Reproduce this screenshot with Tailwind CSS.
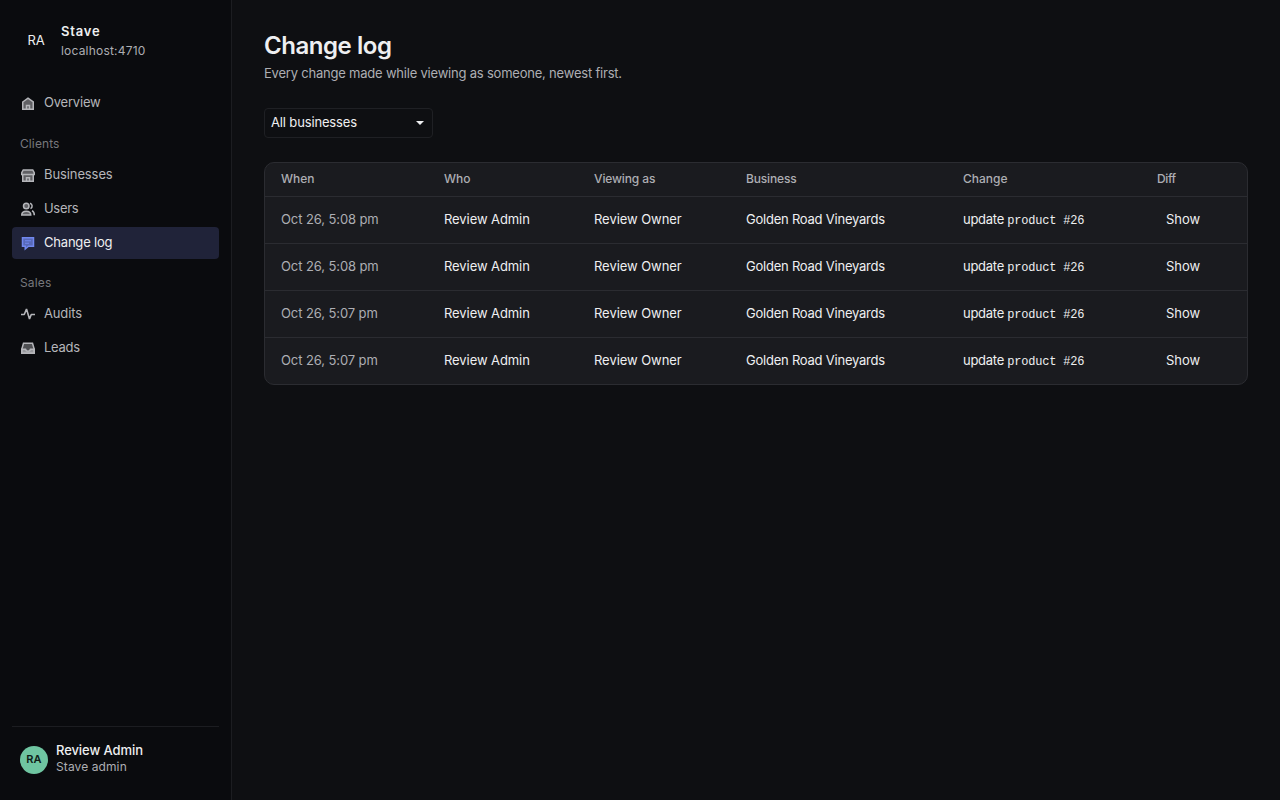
<!DOCTYPE html>
<html lang="en">
<head>
  <meta charset="UTF-8">
  <title>Change log</title>
  <script src="https://cdn.jsdelivr.net/npm/@tailwindcss/browser@4"></script>
</head>
<body class="flex h-screen overflow-hidden bg-[#0e0f12] font-['Inter','Liberation_Sans',sans-serif] text-[13px] leading-5 text-[#eeeff1]">
  <aside class="flex w-[232px] shrink-0 flex-col border-r border-[#1c1d21] bg-[#0a0b0e] px-3 pt-5 pb-[23px]">
    <div class="flex h-10 items-center gap-[9px] pl-2">
      <div class="flex size-8 items-center justify-center tracking-[-0.2px]">RA</div>
      <div>
        <div class="h-[22px] pt-px font-semibold tracking-[0.8px]"><span>Stave</span></div>
        <div class="h-[18px] text-xs leading-[18px] tracking-[0.2px] text-[#adaeb3]"><span>localhost:4710</span></div>
      </div>
    </div>

    <nav class="mt-[27px] flex flex-col text-[#b5b6ba]">
      <a class="flex h-8 items-center gap-2 px-2">
        <svg class="size-4" viewBox="0 0 16 16" fill="none" stroke="currentColor" stroke-width="1.5">
          <path d="M2.75 7 8 3.25 13.250 7v7.250H2.750z" fill="currentColor" fill-opacity=".5"/>
          <path d="M6.500 14v-3.500h3V14"/>
        </svg>
        <span class="pb-0.5 tracking-[-0.2px]">Overview</span>
      </a>

      <div class="mt-2 flex h-8 items-center px-2 pt-0.5 text-xs tracking-[0.1px] text-[#77787d]"><span>Clients</span></div>
      <a class="flex h-8 items-center gap-2 px-2">
        <svg class="size-4" viewBox="0 0 16 16" fill="none" stroke="currentColor" stroke-width="1.5">
          <path d="M3.250 3h9.500l1.500 2.750V7.500H1.750V5.750z" fill="currentColor" fill-opacity=".5"/>
          <path d="M2.750 7.500v6.750h10.500V7.500" fill="currentColor" fill-opacity=".5"/>
          <path d="M6.500 14v-3.250h3V14"/>
        </svg>
        <span class="pb-0.5 tracking-[-0.1px]">Businesses</span>
      </a>
      <a class="mt-0.5 flex h-8 items-center gap-2 px-2">
        <svg class="size-4" viewBox="0 0 16 16" fill="none" stroke="currentColor" stroke-width="1.5">
          <circle cx="6.250" cy="5" r="2.750" fill="currentColor" fill-opacity=".5"/>
          <path d="M1.750 14c0-2.400 1.800-3.750 4.500-3.750s4.500 1.350 4.500 3.750z" fill="currentColor" fill-opacity=".5"/>
          <path d="M10 2.250a2.900 2.900 0 0 1 .5 5.400M12 9.750c1.600.7 2.300 2 2.300 4.500"/>
        </svg>
        <span class="pb-0.5 tracking-[-0.3px]">Users</span>
      </a>
      <a class="mt-0.5 flex h-8 items-center gap-2 rounded bg-[#202339] px-2 text-[#eeeff1]">
        <svg class="size-4 text-[#7188ee]" viewBox="0 0 16 16" fill="none" stroke="currentColor" stroke-width="1.5">
          <path d="M2.500 2.750h11v8.500H8.500L5.250 14v-2.750H2.500z" fill="currentColor" fill-opacity=".7"/>
          <path d="M5 5.750h6M5 8.250h4" stroke-width="1"/>
        </svg>
        <span class="pb-0.5 tracking-[-0.2px]">Change log</span>
      </a>

      <div class="mt-[7px] flex h-8 items-center px-2 pt-0.5 text-xs tracking-[0.15px] text-[#77787d]"><span>Sales</span></div>
      <a class="flex h-8 items-center gap-2 px-2">
        <svg class="size-4" viewBox="0 0 16 16" fill="none" stroke="currentColor" stroke-width="1.6">
          <path d="M1 8.500h3.250L6.500 3l3 10 1.750-4.500H15" stroke-linejoin="bevel"/>
        </svg>
        <span class="pb-0.5 tracking-[-0.15px]">Audits</span>
      </a>
      <a class="mt-0.5 flex h-8 items-center gap-2 px-2">
        <svg class="size-4" viewBox="0 0 16 16" fill="none" stroke="currentColor" stroke-width="1.5">
          <path d="M3.500 3.250h9l1.750 6v4H1.750v-4z" fill="currentColor" fill-opacity=".4"/>
          <path d="M1.750 9.250H5.500c.3 1.300 1.200 2 2.500 2s2.200-.7 2.500-2h3.750v4H1.750z" fill="currentColor" fill-opacity=".7"/>
        </svg>
        <span class="pb-0.5 tracking-[-0.25px]">Leads</span>
      </a>
    </nav>

    <div class="mt-auto flex items-center gap-2 border-t border-[#1c1d21] pt-[15px] pl-2">
      <div class="flex size-7 items-center justify-center rounded-full bg-[#6fc5a1] pb-0.5 text-[11px] font-semibold tracking-[0.2px] text-[#0e1c17]">RA</div>
      <div class="pb-0.5">
        <div class="h-[17px] leading-[17px] font-medium tracking-[-0.08px]"><span>Review Admin</span></div>
        <div class="h-4 text-xs leading-4 tracking-[0.1px] text-[#adaeb3]"><span>Stave admin</span></div>
      </div>
    </div>
  </aside>

  <main class="flex-1 px-8 pt-[30px]">
    <h1 class="text-2xl leading-8 font-semibold tracking-[-0.45px]"><span>Change log</span></h1>
    <p class="mt-px tracking-[-0.21px] text-[#adaeb3]"><span>Every change made while viewing as someone, newest first.</span></p>

    <button class="mt-[25px] flex h-[30px] w-[169px] items-center justify-between rounded border border-[#1f2024] bg-[#0e0f12] pr-2 pl-1.5">
      <span class="pb-[3px] tracking-[-0.15px]">All businesses</span>
      <svg class="h-1 w-2" viewBox="0 0 8 4" fill="currentColor"><path d="M0 0h8L4 4z"/></svg>
    </button>

    <div class="mt-6 overflow-hidden rounded-[10px] border border-[#2b2c31] bg-[#1a1b1f]">
      <table class="w-full table-fixed border-collapse text-left">
        <colgroup>
          <col class="w-[163px]"><col class="w-[150px]"><col class="w-[152px]"><col class="w-[217px]"><col class="w-[194px]"><col>
        </colgroup>
        <thead>
          <tr class="h-[33px] text-xs text-[#adaeb3]">
            <th class="px-4 font-medium"><span>When</span></th>
            <th class="px-4 font-medium"><span>Who</span></th>
            <th class="px-4 font-medium tracking-[-0.12px]"><span>Viewing as</span></th>
            <th class="px-4 font-medium tracking-[-0.15px]"><span>Business</span></th>
            <th class="px-4 font-medium"><span>Change</span></th>
            <th class="px-4 font-medium tracking-[-0.4px]"><span>Diff</span></th>
          </tr>
        </thead>
        <tbody id="rows"></tbody>
      </table>
    </div>
  </main>

  <script>
    const times = ["Oct 26, 5:08 pm", "Oct 26, 5:08 pm", "Oct 26, 5:07 pm", "Oct 26, 5:07 pm"];

    document.getElementById('rows').innerHTML = times.map(time => `
      <tr class="h-[47px] border-t border-[#2b2c31]">
        <td class="px-4 pb-0.5 tracking-[-0.1px] whitespace-nowrap text-[#adaeb3]"><span>${time}</span></td>
        <td class="px-4 pb-0.5 tracking-[-0.08px] whitespace-nowrap"><span>Review Admin</span></td>
        <td class="px-4 pb-0.5 tracking-[-0.06px] whitespace-nowrap"><span>Review Owner</span></td>
        <td class="px-4 pb-0.5 tracking-[-0.23px] whitespace-nowrap"><span>Golden Road Vineyards</span></td>
        <td class="px-4 pb-0.5 tracking-[-0.28px] whitespace-nowrap"><span>update</span> <code class="font-['Liberation_Mono',monospace] text-xs tracking-[-0.2px]">product #26</code></td>
        <td class="pb-0.5 pl-[25px] whitespace-nowrap"><button>Show</button></td>
      </tr>
    `).join('');
  </script>
</body>
</html>
